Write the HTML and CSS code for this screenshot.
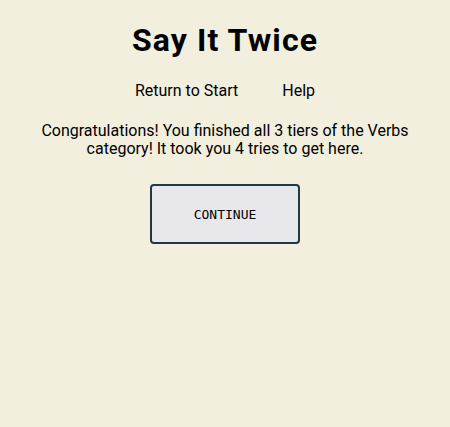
FILE: index.html
```html
<!DOCTYPE html>
<html>
<head>
<meta charset="utf-8">
<link rel="stylesheet" href="styles.css">
</head>
<body>
<div class="page">
  <h1 class="title">Say It Twice</h1>
  <nav class="nav">
    <a class="nav-link" href="#">Return to Start</a>
    <a class="nav-link" href="#">Help</a>
  </nav>
  <p class="message">Congratulations! You finished all 3 tiers of the Verbs category! It took you 4 tries to get here.</p>
  <button class="continue">CONTINUE</button>
</div>
</body>
</html>
```
FILE: styles.css
```css
html, body {
  margin: 0;
  padding: 0;
  background: #f2efdf;
  height: 100%;
}
.page {
  font-family: Roboto, "Liberation Sans", sans-serif;
  color: #000;
  display: flex;
  flex-direction: column;
  align-items: center;
  text-align: center;
  padding: 0 30px;
}
.title {
  font-size: 32px;
  font-weight: 700;
  margin: 21px 0 0;
  line-height: 38px;
  letter-spacing: 1.1px;
}
.nav {
  display: flex;
  gap: 44px;
  margin-top: 22px;
  font-size: 16px;
  line-height: 19px;
}
.nav-link {
  color: #000;
  text-decoration: none;
}
.message {
  font-size: 16px;
  line-height: 18px;
  margin: 22px 0 0;
}
.continue {
  margin-top: 26px;
  width: 150px;
  height: 60px;
  background: #e8e7ec;
  border: 2px solid #1f3a44;
  border-radius: 4px;
  font-family: "DejaVu Sans Mono", monospace;
  font-size: 13px;
  color: #000;
}
```
